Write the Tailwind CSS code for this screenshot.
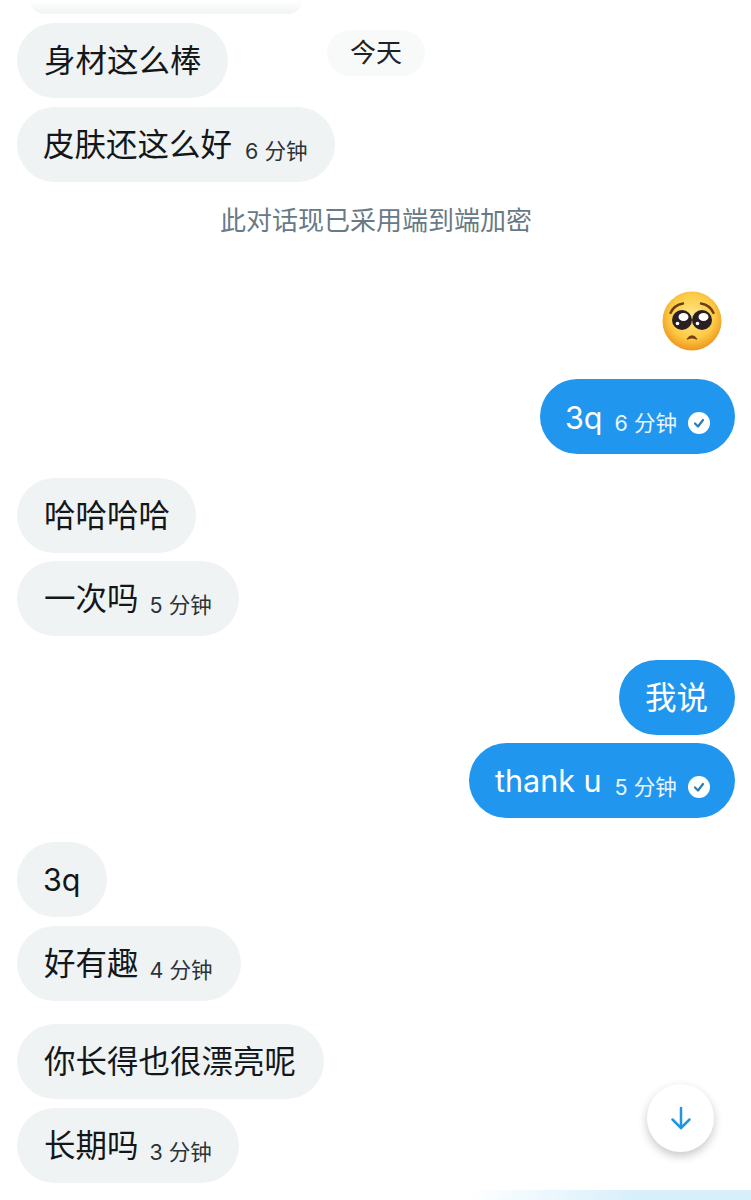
<!DOCTYPE html>
<html lang="zh">
<head>
    <meta charset="UTF-8">
    <meta name="viewport" content="width=device-width, initial-scale=1.0">
    <title>对话</title>
    <script src="https://cdn.jsdelivr.net/npm/@tailwindcss/browser@4"></script>
</head>
<body class="bg-white">
    <div class="relative w-[751px] h-[1200px] overflow-hidden bg-white font-['Inter','Noto_Sans_CJK_SC',sans-serif] text-[31.5px] leading-[40px] text-[#14171a]">

        <!-- date pill -->
        <div class="absolute left-[327px] top-[30px] w-[98px] h-[46px] rounded-full bg-[#f8f9f9] flex items-center justify-center text-[26px] leading-[34px] text-[#1c2226]">今天</div>

        <!-- messages -->
        <div class="flex flex-col pl-[17px] pr-[16px] pb-[17px]">
            <!-- cut off by the top edge -->
            <div class="h-[14px] w-[272px] ml-[13px] rounded-b-[24px] bg-gradient-to-b from-white to-[#f1f3f4]"></div>

            <div class="mt-[9px] self-start h-[75px] w-[211px] rounded-full bg-[#f0f3f4] pl-[27px] flex items-center">身材这么棒</div>
            <div class="mt-[9px] self-start h-[75px] w-[318px] rounded-full bg-[#f0f3f4] pl-[26px] flex items-center">
                皮肤还这么好<span class="ml-[13px] mt-[12px] text-[21.5px] text-[#2b3338]">6 分钟</span>
            </div>

            <div class="mt-[19px] h-[40px] text-center text-[26px] leading-[40px] text-[#687a86]">此对话现已采用端到端加密</div>

            <!-- pleading face -->
            <div class="mt-[50px] self-end h-[60px] mr-[13px]">
                <svg width="60" height="60" viewBox="0 0 60 60">
                    <defs>
                        <radialGradient id="face" cx="50%" cy="42%" r="58%">
                            <stop offset="0%" stop-color="#ffe88c"/>
                            <stop offset="65%" stop-color="#fdcb45"/>
                            <stop offset="100%" stop-color="#ee951c"/>
                        </radialGradient>
                    </defs>
                    <circle cx="30" cy="30" r="29.5" fill="url(#face)"/>
                    <path d="M8.500 22 Q12 14 21 12.500" fill="none" stroke="#6b3d12" stroke-width="2.4" stroke-linecap="round"/>
                    <path d="M51.500 22 Q48 14 39 12.500" fill="none" stroke="#6b3d12" stroke-width="2.4" stroke-linecap="round"/>
                    <circle cx="20" cy="29" r="10" fill="#2a2024"/>
                    <circle cx="40" cy="29" r="10" fill="#2a2024"/>
                    <ellipse cx="21.500" cy="26" rx="5" ry="4" fill="#fff"/>
                    <ellipse cx="41.500" cy="26" rx="5" ry="4" fill="#fff"/>
                    <circle cx="15.500" cy="32.500" r="1.800" fill="#fff"/>
                    <circle cx="35.500" cy="32.500" r="1.800" fill="#fff"/>
                    <path d="M25.500 48 Q30 42 34.500 48 Q30 45.500 25.500 48 Z" fill="#7a3b16" stroke="#7a3b16" stroke-width="1.400" stroke-linejoin="round"/>
                </svg>
            </div>

            <div class="mt-[28px] self-end h-[75px] w-[195px] rounded-full bg-[#2196ee] pl-[25px] flex items-center text-white">
                <span class="mt-[2px] text-[30.5px]">3q</span><span class="ml-[12px] mt-[13px] text-[21.5px] text-white/90">6 分钟</span>
                <svg class="ml-[11px] mt-[13px]" width="22" height="22" viewBox="0 0 22 22"><circle cx="11" cy="11" r="11" fill="#fff"/><path d="M7 11.500l3 3 5-6.500" fill="none" stroke="#2a7cb8" stroke-width="2.200" stroke-linecap="round" stroke-linejoin="round"/></svg>
            </div>

            <div class="mt-[24px] self-start h-[75px] w-[179px] rounded-full bg-[#f0f3f4] pl-[27px] flex items-center">哈哈哈哈</div>
            <div class="mt-[8px] self-start h-[75px] w-[222px] rounded-full bg-[#f0f3f4] pl-[27px] flex items-center">
                一次吗<span class="ml-[11px] mt-[12px] text-[21.5px] text-[#2b3338]">5 分钟</span>
            </div>

            <div class="mt-[24px] self-end h-[75px] w-[116px] rounded-full bg-[#2196ee] pl-[26px] flex items-center text-white">我说</div>
            <div class="mt-[8px] self-end h-[75px] w-[266px] rounded-full bg-[#2196ee] pl-[26px] flex items-center text-white">
                <span class="text-[30.5px]">thank u</span><span class="ml-[13px] mt-[13px] text-[21.5px] text-white/90">5 分钟</span>
                <svg class="ml-[11px] mt-[13px]" width="22" height="22" viewBox="0 0 22 22"><circle cx="11" cy="11" r="11" fill="#fff"/><path d="M7 11.500l3 3 5-6.500" fill="none" stroke="#2a7cb8" stroke-width="2.200" stroke-linecap="round" stroke-linejoin="round"/></svg>
            </div>

            <div class="mt-[24px] self-start h-[75px] w-[90px] rounded-full bg-[#f0f3f4] pl-[26px] flex items-center text-[30.5px]">3q</div>
            <div class="mt-[9px] self-start h-[75px] w-[224px] rounded-full bg-[#f0f3f4] pl-[27px] flex items-center">
                好有趣<span class="ml-[11px] mt-[12px] text-[21.5px] text-[#2b3338]">4 分钟</span>
            </div>

            <div class="mt-[23px] self-start h-[75px] w-[307px] rounded-full bg-[#f0f3f4] pl-[27px] flex items-center">你长得也很漂亮呢</div>
            <div class="mt-[9px] self-start h-[75px] w-[222px] rounded-full bg-[#f0f3f4] pl-[27px] flex items-center">
                长期吗<span class="ml-[11px] mt-[12px] text-[21.5px] text-[#2b3338]">3 分钟</span>
            </div>
        </div>

        <!-- scroll to bottom -->
        <div class="absolute left-[647px] top-[1084px] w-[67px] h-[68px] rounded-full bg-white shadow-[0_4px_10px_rgba(0,0,0,0.22)] flex items-center justify-center">
            <svg width="22" height="24" viewBox="0 0 22 24" fill="none" stroke="#2196e0" stroke-width="2.500" stroke-linecap="round" stroke-linejoin="round"><path d="M11 2v20"/><path d="M2.500 13.500L11 22l8.500-8.500"/></svg>
        </div>

        <!-- bottom bar peeking in -->
        <div class="absolute left-0 bottom-0 w-full h-[10px] bg-gradient-to-r from-white from-[62%] to-[#d6effb] to-[85%]"></div>
    </div>
</body>
</html>
